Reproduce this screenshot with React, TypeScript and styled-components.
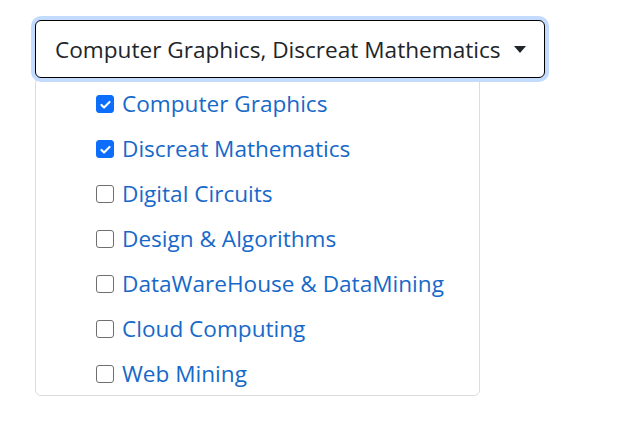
import React from 'react';
import styled, { createGlobalStyle } from 'styled-components';

const Global = createGlobalStyle`
  body {
    margin: 0;
    background: #fff;
    font-family: "Open Sans", "Noto Sans", sans-serif;
  }
`;

const Page = styled.div`
  padding: 20px 0 0 35px;
`;

const Dropdown = styled.div`
  display: flex;
  flex-direction: column;
  align-items: flex-start;
`;

const Toggle = styled.button`
  display: flex;
  align-items: center;
  gap: 13px;
  width: 510px;
  height: 58px;
  padding: 0 20px 0 19px;
  background: #fff;
  border: 1px solid #000;
  border-radius: 6px;
  box-shadow: 0 0 0 4px #c2dbfe;
  color: #212529;
  font-family: inherit;
  font-size: 22.6px;
  white-space: nowrap;
  position: relative;
  z-index: 1;
`;

const Label = styled.span`
  white-space: nowrap;
`;

const Caret = styled.span`
  flex-shrink: 0;
  width: 0;
  height: 0;
  border-left: 6px solid transparent;
  border-right: 6px solid transparent;
  border-top: 7px solid #212529;
  margin-top: 1px;
`;

const Menu = styled.ul`
  list-style: none;
  margin: -1px 0 0;
  padding: 3px 0 0;
  width: 445px;
  height: 319px;
  box-sizing: border-box;
  border: 1px solid #dcdcdc;
  border-radius: 6px;
  background: #fff;
`;

const Item = styled.li`
  display: flex;
  align-items: center;
  gap: 8px;
  height: 45px;
  padding-left: 60px;
  color: #1769c9;
  font-size: 22.6px;
  white-space: nowrap;
`;

const Box = styled.span<{ $checked: boolean }>`
  display: flex;
  align-items: center;
  justify-content: center;
  flex-shrink: 0;
  width: 18px;
  height: 18px;
  box-sizing: border-box;
  border-radius: 3px;
  border: 1px solid ${(p) => (p.$checked ? '#0d6efd' : '#6f6f6f')};
  background: ${(p) => (p.$checked ? '#0d6efd' : '#fff')};
  margin-top: 1px;
`;

const items = [
  { label: 'Computer Graphics', checked: true },
  { label: 'Discreat Mathematics', checked: true },
  { label: 'Digital Circuits', checked: false },
  { label: 'Design & Algorithms', checked: false },
  { label: 'DataWareHouse & DataMining', checked: false },
  { label: 'Cloud Computing', checked: false },
  { label: 'Web Mining', checked: false },
];

export default function App() {
  const selected = items.filter((i) => i.checked).map((i) => i.label).join(', ');
  return (
    <>
      <Global />
      <Page>
        <Dropdown>
          <Toggle>
            <Label>{selected}</Label>
            <Caret />
          </Toggle>
          <Menu>
            {items.map((item) => (
              <Item key={item.label}>
                <Box $checked={item.checked}>
                  {item.checked && (
                    <svg width="13" height="13" viewBox="0 0 16 16">
                      <path d="M3 8.5l3.2 3.2L13 4.8" fill="none" stroke="#fff" strokeWidth="2.6" strokeLinecap="round" strokeLinejoin="round" />
                    </svg>
                  )}
                </Box>
                {item.label}
              </Item>
            ))}
          </Menu>
        </Dropdown>
      </Page>
    </>
  );
}
